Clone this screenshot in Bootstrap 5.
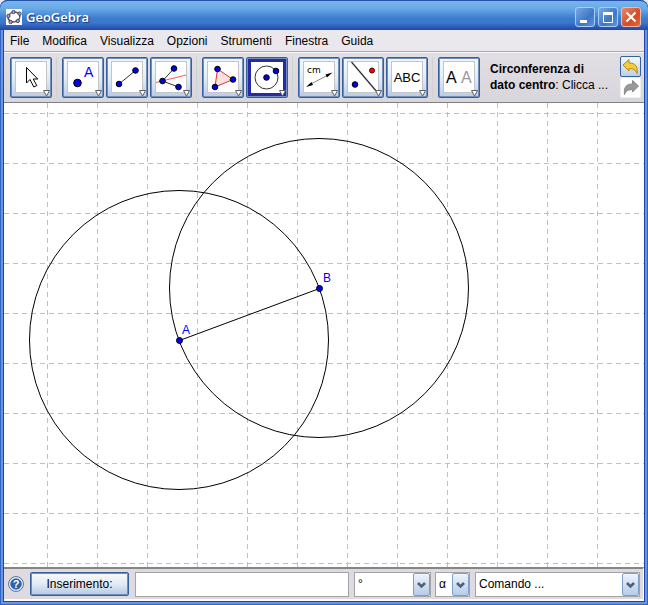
<!DOCTYPE html>
<html lang="it">
<head>
<meta charset="utf-8">
<meta name="viewport" content="width=device-width, initial-scale=1">
<title>GeoGebra</title>
<link href="https://cdn.jsdelivr.net/npm/bootstrap@5.3.0/dist/css/bootstrap.min.css" rel="stylesheet">
<style>
body { font: 12px/16px "Liberation Sans", Arial, sans-serif; color: #000; background: #e8e8ec; }
.app-window { padding: 0 4px 4px; border-radius: 8px 8px 0 0; background: #1f45a8; box-shadow: inset 0 0 0 1px #3563c4, inset 0 0 0 3px #6796e4; }
.title-strip { height: 30px; margin: 0 -4px; padding: 2px 7px 0 6px; border-radius: 8px 8px 0 0; border-top: 1px solid #2450a8;
  background: linear-gradient(#78b4ea, #6aabe6 25%, #3c7cce 60%, #3a78cc 75%, #2a55b4 92%, #2446a8); }
.title-text { font: 600 13px/18px "Open Sans", "Noto Sans", sans-serif; color: #fff; text-shadow: 1px 1px 1px #143a80; }
.win-btns { gap: 3px; }
.win-btn { width: 20px; height: 20px; border: 1px solid #a8cdf2; border-radius: 3px; background: linear-gradient(135deg, #78aae2, #3c76c8 60%, #5c96dc); }
.win-close { border-color: #f0b8a8; background: linear-gradient(135deg, #e88a6c, #d84a20 60%, #e06a40); }
.menu-strip { height: 22px; padding: 0 6px; gap: 13px; background: #ebe8ed; border-bottom: 1px solid #a9a9ad; }
.menu-item { border: 0; padding: 0; background: none; color: #000; }
.tool-strip { height: 51px; padding: 0 3px 1px 6px; background: linear-gradient(#e2dfe4, #d8d5db); border-bottom: 1px solid #808080; border-top: 1px solid #f8f8f8; }
.tool-set { gap: 2px; }
.tool-sets { gap: 4px; }
.tool-set + .tool-set { padding-left: 5px; border-left: 1px solid #d2cfd5; }
.tool-btn { width: 42px; height: 41px; border: 1px solid #36609c; border-radius: 2px; box-shadow: inset 0 0 0 1px #6e8fbc; background: linear-gradient(#f4f8fc, #e4edf6 50%, #b8cce6); }
.tool-btn svg, .win-btn svg { display: block; margin: 0 auto; }
.tool-hint { padding-left: 10px; min-width: 0; }
.side-btn { width: 21px; height: 21px; border: 1px solid #36609c; border-radius: 2px; background: linear-gradient(#f4f8fc, #bccfe8); }
.side-btn:disabled { border-color: #eee; background: #fff; }
.canvas { background: #fff; min-height: 0; }
.input-strip { height: 34px; padding: 0 3px 0 4px; background: #dedae0; border-top: 2px solid #858585; border-bottom: 2px solid #fff; border-right: 1px solid #fff; }
.help-btn { width: 16px; height: 16px; }
.entry-btn { width: 99px; height: 24px; margin-left: 6px; border: 1px solid #36609c; border-radius: 2px; box-shadow: inset 0 0 0 1px #6e8fbc; color: #000; background: linear-gradient(#f8fafc, #e2eaf4 50%, #b4c8e2); }
.entry-field, .pick { height: 25px; border: 1px solid #a4a4a8; background-color: #fff; color: #000; min-width: 0; }
.entry-field { margin-left: 6px; padding: 0 4px; }
.pick { appearance: none; padding: 0 20px 0 3px; border-radius: 0; background-repeat: no-repeat; background-position: right 0 center;
  background-image: url("data:image/svg+xml,%3Csvg xmlns='http://www.w3.org/2000/svg' width='17' height='23'%3E%3Cdefs%3E%3ClinearGradient id='g' x2='0' y2='1'%3E%3Cstop stop-color='%23eef5fc'/%3E%3Cstop offset='1' stop-color='%23b4cbe8'/%3E%3C/linearGradient%3E%3C/defs%3E%3Crect x='.5' y='.5' width='16' height='22' rx='1.5' fill='url(%23g)' stroke='%237d9fc8'/%3E%3Cpath d='M5 10l3.5 3.5L12 10' fill='none' stroke='%23505f78' stroke-width='2.6'/%3E%3C/svg%3E"); }
.pick-symbol { width: 77px; margin-left: 5px; }
.pick-greek { width: 35px; margin-left: 4px; }
.pick-command { width: 165px; margin-left: 5px; }
</style>
<script src="https://cdn.jsdelivr.net/npm/bootstrap@5.3.0/dist/js/bootstrap.bundle.min.js"></script>
</head>
<body>
<svg width="0" height="0" class="position-absolute" aria-hidden="true">
  <defs>
    <g id="sheet"><rect x="3.5" y="2.5" width="31" height="31" fill="#fff" stroke="#c4c4c8"/></g>
    <g id="drop"><path d="M31.5 31.5h6l-3 5.5z" fill="#fff" stroke="#606060"/></g>
    <circle id="dot" r="2.8" fill="#0000ee" stroke="#000"/>
  </defs>
</svg>
<div class="app-window d-flex flex-column vh-100 w-100">
  <header class="title-strip d-flex align-items-center flex-shrink-0">
    <svg width="16" height="16" viewBox="0 0 16 16" aria-hidden="true"><rect width="16" height="16" fill="#fff"/><ellipse cx="8" cy="8" rx="6" ry="4.8" transform="rotate(-15 8 8)" fill="none" stroke="#555" stroke-width="1.5"/><g fill="#9999ff" stroke="#333" stroke-width=".8"><circle cx="7.5" cy="3" r="1.7"/><circle cx="13.600" cy="4.6" r="1.7"/><circle cx="2.4" cy="7" r="1.7"/><circle cx="4.6" cy="13" r="1.7"/><circle cx="11.8" cy="12" r="1.7"/></g></svg>
    <span class="title-text flex-grow-1 ps-1">GeoGebra</span>
    <div class="win-btns d-flex align-items-center">
      <button class="win-btn p-0" type="button" aria-label="Riduci a icona"><svg width="18" height="18"><path d="M4 12h7v3H4z" fill="#fff"/></svg></button>
      <button class="win-btn p-0" type="button" aria-label="Ingrandisci"><svg width="18" height="18"><path d="M4.500 5v9.500h9V5" fill="none" stroke="#fff"/><path d="M4 4h10v3H4z" fill="#fff"/></svg></button>
      <button class="win-btn win-close p-0" type="button" aria-label="Chiudi"><svg width="18" height="18"><path d="M4.500 4.500l9 9M13.500 4.500l-9 9" stroke="#fff" stroke-width="2.200"/></svg></button>
    </div>
  </header>

  <nav class="menu-strip d-flex align-items-center flex-shrink-0" aria-label="Menu">
    <button class="menu-item" type="button">File</button>
    <button class="menu-item" type="button">Modifica</button>
    <button class="menu-item" type="button">Visualizza</button>
    <button class="menu-item" type="button">Opzioni</button>
    <button class="menu-item" type="button">Strumenti</button>
    <button class="menu-item" type="button">Finestra</button>
    <button class="menu-item" type="button">Guida</button>
  </nav>

  <div class="tool-strip d-flex align-items-center flex-shrink-0">
    <div class="tool-sets d-flex flex-shrink-0">
      <div class="tool-set d-flex">
        <button class="tool-btn p-0" type="button" aria-label="Muovi"><svg width="38" height="37"><use href="#sheet"/><path d="M14.500 8.500v15.500l3.500-3.500 3.800 7.500 3-1.500-3.600-6.500h4.600z" fill="#fff" stroke="#000"/><use href="#drop"/></svg></button>
      </div>
      <div class="tool-set d-flex">
        <button class="tool-btn p-0" type="button" aria-label="Nuovo punto"><svg width="38" height="37"><use href="#sheet"/><circle cx="13.500" cy="24" r="3.800" fill="#00f" stroke="#000"/><text x="20" y="18" font-size="14" fill="#00f">A</text><use href="#drop"/></svg></button>
        <button class="tool-btn p-0" type="button" aria-label="Segmento"><svg width="38" height="37"><use href="#sheet"/><path d="M11 25L27.500 11.500" stroke="#333"/><use href="#dot" x="11" y="25"/><use href="#dot" x="27.500" y="11.500"/><use href="#drop"/></svg></button>
        <button class="tool-btn p-0" type="button" aria-label="Bisettrice"><svg width="38" height="37"><use href="#sheet"/><path d="M4 23.500L34 16" stroke="#f55"/><path d="M22 9.500L10.500 22l16 6" fill="none" stroke="#333"/><use href="#dot" x="22" y="9.500"/><use href="#dot" x="10.500" y="22"/><use href="#dot" x="26.500" y="28"/><use href="#drop"/></svg></button>
      </div>
      <div class="tool-set d-flex">
        <button class="tool-btn p-0" type="button" aria-label="Poligono"><svg width="38" height="37"><use href="#sheet"/><path d="M13.500 10L29 20.500 11 28z" fill="#fbe0e0" stroke="#d33"/><use href="#dot" x="13.500" y="10"/><use href="#dot" x="29" y="20.500"/><use href="#dot" x="11" y="28"/><use href="#drop"/></svg></button>
        <button class="tool-btn p-0" type="button" aria-label="Circonferenza di dato centro" aria-pressed="true"><svg width="38" height="37"><rect x="1.500" y="1.500" width="35" height="34" fill="#fff" stroke="#2828a8" stroke-width="3"/><circle cx="18.500" cy="18.500" r="11.500" fill="none" stroke="#333"/><use href="#dot" x="18.500" y="18.500"/><use href="#dot" x="28" y="12"/><use href="#drop"/></svg></button>
      </div>
      <div class="tool-set d-flex">
        <button class="tool-btn p-0" type="button" aria-label="Distanza"><svg width="38" height="37"><use href="#sheet"/><text x="7" y="14" font-size="9" font-family="DejaVu Sans, sans-serif">cm</text><path d="M9 26L30 15" stroke="#888"/><path d="M6 28l5.500-5 1.500 3zM32.500 13.500l-5.500 5-1.500-3z"/><use href="#drop"/></svg></button>
        <button class="tool-btn p-0" type="button" aria-label="Simmetria assiale"><svg width="38" height="37"><use href="#sheet"/><path d="M7.500 3L33 33" stroke="#333" stroke-width="1.300"/><use href="#dot" x="11" y="25.500"/><circle cx="28" cy="11.500" r="2.500" fill="#f00" stroke="#500"/><use href="#drop"/></svg></button>
        <button class="tool-btn p-0" type="button" aria-label="Testo"><svg width="38" height="37"><use href="#sheet"/><text x="19" y="23" text-anchor="middle" font-size="13">ABC</text><use href="#drop"/></svg></button>
      </div>
      <div class="tool-set d-flex">
        <button class="tool-btn p-0" type="button" aria-label="Copia stile visuale"><svg width="38" height="37"><use href="#sheet"/><text x="6" y="24" font-size="16">A</text><text x="21" y="24" font-size="16" fill="#999">A</text><use href="#drop"/></svg></button>
      </div>
    </div>
    <div class="tool-hint flex-grow-1"><b>Circonferenza di<br>dato centro</b>: Clicca ...</div>
    <div class="d-flex flex-column flex-shrink-0">
      <button class="side-btn p-0" type="button" aria-label="Annulla"><svg class="d-block" width="19" height="19"><path d="M2 8l6-5.500V6c6 0 9 3 8 10.500-1.500-4-4-5-8-4.800V14z" fill="#f4cc3c" stroke="#b08a10"/></svg></button>
      <button class="side-btn p-0" type="button" aria-label="Ripristina" disabled><svg class="d-block" width="19" height="19"><path d="M17.500 8l-6-5.500V6c-6 0-9 3-8 10.500 1.500-4 4-5 8-4.800V14z" fill="#999" stroke="#888"/></svg></button>
    </div>
  </div>

  <main class="canvas flex-grow-1">
    <svg class="d-block w-100 h-100" role="img" aria-label="Costruzione geometrica">
      <defs>
        <pattern id="rows" width="9" height="50" patternUnits="userSpaceOnUse"><path d="M0 10.500h5" stroke="#c0c0c0"/></pattern>
        <pattern id="cols" width="50" height="9" patternUnits="userSpaceOnUse"><path d="M43.500 0v5" stroke="#c0c0c0"/></pattern>
      </defs>
      <rect width="100%" height="100%" fill="url(#rows)"/>
      <rect width="100%" height="100%" fill="url(#cols)"/>
      <g fill="none" stroke="#000"><circle cx="175" cy="237" r="149.500"/><circle cx="315" cy="185" r="149.500"/><path d="M175.500 237.500l140-52"/></g>
      <g fill="#00f" stroke="#000"><circle cx="175.500" cy="237.500" r="3"/><circle cx="315.500" cy="185.500" r="3"/></g>
      <g fill="#00f" font-size="12"><text x="178" y="231">A</text><text x="319" y="179">B</text></g>
    </svg>
  </main>

  <form class="input-strip d-flex align-items-center flex-shrink-0">
    <button class="help-btn border-0 p-0 bg-transparent flex-shrink-0" type="button" aria-label="Aiuto"><svg class="d-block" width="16" height="16"><circle cx="8" cy="8" r="7.400" fill="#fff" stroke="#3c68a4"/><circle cx="8" cy="8" r="5.800" fill="#2f64a8"/><text x="8" y="12" text-anchor="middle" font-size="11" font-weight="700" fill="#fff">?</text></svg></button>
    <button class="entry-btn p-0 flex-shrink-0" type="button">Inserimento:</button>
    <input class="entry-field flex-grow-1" type="text" aria-label="Inserimento">
    <select class="pick pick-symbol" aria-label="Simboli"><option>°</option></select>
    <select class="pick pick-greek" aria-label="Lettere greche"><option>α</option></select>
    <select class="pick pick-command" aria-label="Comando"><option>Comando ...</option></select>
  </form>
</div>
</body>
</html>
